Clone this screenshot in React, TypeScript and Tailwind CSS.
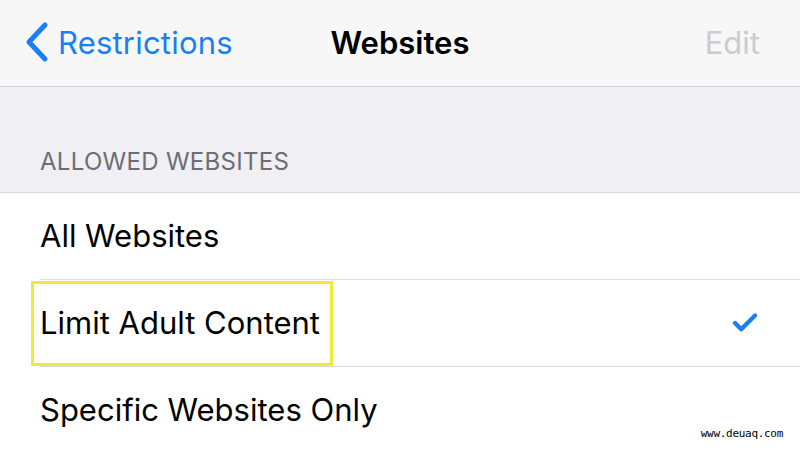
import { Check } from 'lucide-react';

const ROWS = [
  { label: 'All Websites', checked: false, highlight: false },
  { label: 'Limit Adult Content', checked: true, highlight: true },
  { label: 'Specific Websites Only', checked: false, highlight: false },
];

export default function App() {
  return (
    <div className="w-[800px] h-[450px] overflow-hidden bg-[#efeff4] font-['Inter',sans-serif] relative">
      <div className="h-[87px] bg-[#f7f7f8] border-b border-[#d3d3d8] flex items-center relative">
        <div className="flex items-center pl-[24px] text-[#1a7ff3]">
          <svg width="26" height="42" viewBox="0 0 26 42" className="-mt-[2px]">
            <path d="M21 4 L5 21 L21 38" fill="none" stroke="currentColor" strokeWidth="5" strokeLinecap="round" strokeLinejoin="round" />
          </svg>
          <span className="ml-[8px] text-[31px] tracking-[0.2px]">Restrictions</span>
        </div>
        <div className="absolute left-0 right-0 text-center text-[31px] font-semibold text-black pointer-events-none">Websites</div>
        <div className="ml-auto pr-[40px] text-[31px] text-[#cbcbd0]">Edit</div>
      </div>
      <div className="h-[105px] flex items-end pl-[40px] pb-[12px] text-[#6d6d72] text-[24px] tracking-[0.3px]">
        ALLOWED WEBSITES
      </div>
      <div className="bg-white border-t border-[#d6d6da]">
        {ROWS.map((row, i) => (
          <div key={row.label} className="pl-[40px]">
            <div className={`h-[87px] flex items-center pr-[40px] ${i < ROWS.length - 1 ? 'border-b border-[#dcdce0]' : ''}`}>
              <span
                className={`text-[31px] text-black ${
                  row.highlight ? 'border-[3px] border-[#f1ea3a] -ml-[9px] pl-[6px] pr-[10px] h-[85px] self-end flex items-center' : ''
                }`}
              >
                {row.label}
              </span>
              {row.checked && <Check className="ml-auto text-[#1a7ff3]" size={30} strokeWidth={3.5} />}
            </div>
          </div>
        ))}
      </div>
      <div className="absolute right-[17px] bottom-[8px] text-[11px] font-['DejaVu_Sans_Mono',monospace] tracking-[-0.3px] text-black">www.deuaq.com</div>
    </div>
  );
}
